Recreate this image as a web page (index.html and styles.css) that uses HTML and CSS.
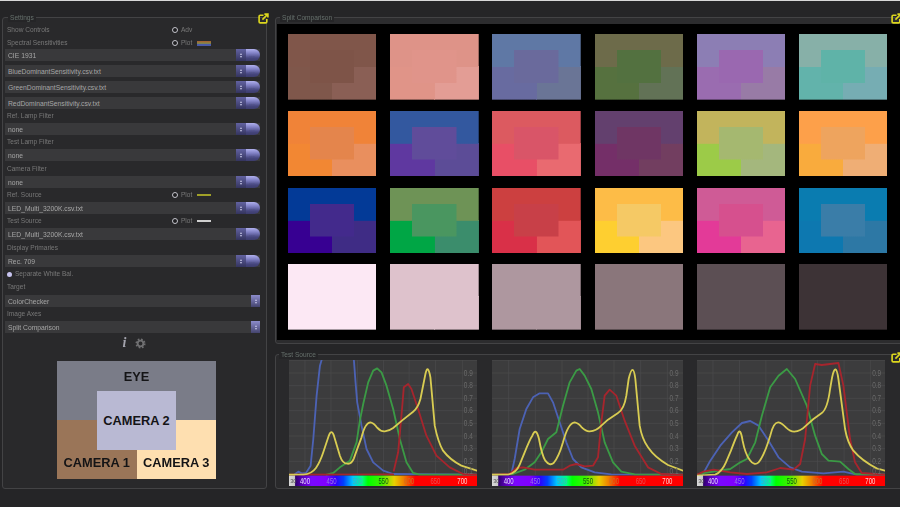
FILE: index.html
```html
<!DOCTYPE html>
<html lang="en">
<head>
<meta charset="utf-8">
<title>Split Comparison</title>
<link rel="stylesheet" href="styles.css">
</head>
<body>
<svg class="defs" width="0" height="0" aria-hidden="true">
  <defs>
    <linearGradient id="spectrum">
      <stop offset="0" stop-color="#d8d8d8"/>
      <stop offset=".03" stop-color="#c8c8c8"/>
      <stop offset=".035" stop-color="#300070"/>
      <stop offset=".07" stop-color="#5a00b8"/>
      <stop offset=".12" stop-color="#7a08ff"/>
      <stop offset=".2" stop-color="#8000ff"/>
      <stop offset=".25" stop-color="#3000ff"/>
      <stop offset=".29" stop-color="#0040ff"/>
      <stop offset=".34" stop-color="#00c8ff"/>
      <stop offset=".39" stop-color="#00ff80"/>
      <stop offset=".42" stop-color="#00ff00"/>
      <stop offset=".49" stop-color="#40f000"/>
      <stop offset=".56" stop-color="#e8d000"/>
      <stop offset=".61" stop-color="#f08000"/>
      <stop offset=".67" stop-color="#ff0000"/>
      <stop offset="1" stop-color="#ff0000"/>
    </linearGradient>
  </defs>
</svg>
<div class="app">
  <section class="panel settings">
    <h2 class="panel-title">Settings</h2>
    <svg class="pop" viewBox="0 0 10 10"><path d="M5 2H2a1 1 0 0 0-1 1v5a1 1 0 0 0 1 1h5a1 1 0 0 0 1-1V5.500M4 6l4.500-4.500M5.800 1H9v3.200"/></svg>
    <div class="stack">
      <div class="lbl"><span class="name">Show Controls</span><i class="radio"></i><span class="opt">Adv</span></div>
      <div class="lbl"><span class="name">Spectral Sensitivities</span><i class="radio"></i><span class="opt">Plot</span><i class="swatch rainbow"></i></div>
      <div class="field first"><span>CIE 1931</span><span class="pill"><span class="spin"></span><span class="dots">...</span></span></div>
      <div class="field"><span>BlueDominantSensitivity.csv.txt</span><span class="pill"><span class="spin"></span><span class="dots">...</span></span></div>
      <div class="field"><span>GreenDominantSensitivity.csv.txt</span><span class="pill"><span class="spin"></span><span class="dots">...</span></span></div>
      <div class="field"><span>RedDominantSensitivity.csv.txt</span><span class="pill"><span class="spin"></span><span class="dots">...</span></span></div>
      <div class="lbl"><span class="name">Ref. Lamp Filter</span></div>
      <div class="field"><span>none</span><span class="pill"><span class="spin"></span><span class="dots">...</span></span></div>
      <div class="lbl"><span class="name">Test Lamp Filter</span></div>
      <div class="field"><span>none</span><span class="pill"><span class="spin"></span><span class="dots">...</span></span></div>
      <div class="lbl spaced"><span class="name">Camera Filter</span></div>
      <div class="field"><span>none</span><span class="pill"><span class="spin"></span><span class="dots">...</span></span></div>
      <div class="lbl"><span class="name">Ref. Source</span><i class="radio"></i><span class="opt">Plot</span><i class="swatch olive"></i></div>
      <div class="field"><span>LED_Multi_3200K.csv.txt</span><span class="pill"><span class="spin"></span><span class="dots">...</span></span></div>
      <div class="lbl"><span class="name">Test Source</span><i class="radio"></i><span class="opt">Plot</span><i class="swatch white"></i></div>
      <div class="field"><span>LED_Multi_3200K.csv.txt</span><span class="pill"><span class="spin"></span><span class="dots">...</span></span></div>
      <div class="lbl spaced"><span class="name">Display Primaries</span></div>
      <div class="field"><span>Rec. 709</span><span class="pill"><span class="spin"></span><span class="dots">...</span></span></div>
      <div class="lbl check"><i class="dot"></i><span class="name">Separate White Bal.</span></div>
      <div class="lbl"><span class="name">Target</span></div>
      <div class="field spaced"><span>ColorChecker</span><span class="square"><span class="spin"></span></span></div>
      <div class="lbl"><span class="name">Image Axes</span></div>
      <div class="field"><span>Split Comparison</span><span class="square"><span class="spin"></span></span></div>
    </div>
    <div class="tools">
      <span class="info">i</span>
      <svg class="gear" viewBox="0 0 12 12"><circle cx="6" cy="6" r="3.100"/><circle class="teeth" cx="6" cy="6" r="4.700"/></svg>
    </div>
    <div class="legend">
      <div class="zone eye">EYE</div>
      <div class="zone cam1">CAMERA 1</div>
      <div class="zone cam3">CAMERA 3</div>
      <div class="cam2">CAMERA 2</div>
    </div>
  </section>

  <div class="main">
    <section class="panel comparison">
      <h2 class="panel-title">Split Comparison</h2>
      <svg class="pop" viewBox="0 0 10 10"><path d="M5 2H2a1 1 0 0 0-1 1v5a1 1 0 0 0 1 1h5a1 1 0 0 0 1-1V5.500M4 6l4.500-4.500M5.800 1H9v3.200"/></svg>
      <div class="viewport">
        <div class="patches">
          <div class="patch p1"></div><div class="patch p2"></div><div class="patch p3"></div><div class="patch p4"></div><div class="patch p5"></div><div class="patch p6"></div>
          <div class="patch p7"></div><div class="patch p8"></div><div class="patch p9"></div><div class="patch p10"></div><div class="patch p11"></div><div class="patch p12"></div>
          <div class="patch p13"></div><div class="patch p14"></div><div class="patch p15"></div><div class="patch p16"></div><div class="patch p17"></div><div class="patch p18"></div>
          <div class="patch p19"></div><div class="patch p20"></div><div class="patch p21"></div><div class="patch p22"></div><div class="patch p23"></div><div class="patch p24"></div>
        </div>
      </div>
    </section>

    <section class="panel source">
      <h2 class="panel-title">Test Source</h2>
      <svg class="pop" viewBox="0 0 10 10"><path d="M5 2H2a1 1 0 0 0-1 1v5a1 1 0 0 0 1 1h5a1 1 0 0 0 1-1V5.500M4 6l4.500-4.500M5.800 1H9v3.200"/></svg>
      <div class="charts">
        <svg class="chart" viewBox="57 43 565 378" preserveAspectRatio="none">
          <path class="grid" d="M57 44H622M57 82H622M57 120H622M57 158H622M57 195H622M57 233H622M57 271H622M57 309H622M57 347H622M105 43V387M183 43V387M263 43V387M341 43V387M418 43V387M497 43V387M578 43V387"/>
          <path class="c-blue" d="M75 385L85 378L95 383L108 382L122 360L130 280L140 150L150 60L155 43M252 43L257 110L262 170L275 240L290 310L310 350L340 375L370 385L620 387"/>
          <path class="c-green" d="M170 387L190 382L210 365L240 345L260 290L270 225L280 175L295 110L310 75L322 68L335 80L350 120L370 190L390 280L410 350L430 382L450 387L620 387"/>
          <path class="c-red" d="M57 387L370 386M372 375L385 320L395 210L402 125L415 115L425 130L445 190L470 270L500 330L540 365L580 385L620 387"/>
          <path class="c-yellow" d="M57 387L100 387Q125 385 138 367Q150 350 160 320Q170 290 176 272Q184 248 192 270Q198 290 210 330Q218 354 232 354Q245 356 252 338Q260 315 275 275Q286 230 302 230Q312 232 322 246Q332 258 345 257Q358 256 370 247L400 222L430 198Q444 188 452 160Q462 110 467 85Q474 52 482 95L495 240Q505 290 520 315Q540 342 575 360L622 375"/>
          <rect class="bar" x="57" y="390" width="565" height="31"/>
          <g class="ylab"><text x="596" y="90" textLength="27" lengthAdjust="spacingAndGlyphs">0.9</text><text x="596" y="128" textLength="27" lengthAdjust="spacingAndGlyphs">0.8</text><text x="596" y="166" textLength="27" lengthAdjust="spacingAndGlyphs">0.7</text><text x="596" y="203" textLength="27" lengthAdjust="spacingAndGlyphs">0.6</text><text x="596" y="241" textLength="27" lengthAdjust="spacingAndGlyphs">0.5</text><text x="596" y="279" textLength="27" lengthAdjust="spacingAndGlyphs">0.4</text><text x="596" y="316" textLength="27" lengthAdjust="spacingAndGlyphs">0.3</text><text x="596" y="354" textLength="27" lengthAdjust="spacingAndGlyphs">0.2</text><text x="596" y="386" textLength="27" lengthAdjust="spacingAndGlyphs">0.1</text></g>
          <g class="xlab"><text class="n0" x="70" y="413">30</text><text class="n1" x="105" y="414" textLength="30" lengthAdjust="spacingAndGlyphs">400</text><text class="n2" x="185" y="414" textLength="30" lengthAdjust="spacingAndGlyphs">450</text><text class="n3" x="263" y="414" textLength="30" lengthAdjust="spacingAndGlyphs">500</text><text class="n4" x="341" y="414" textLength="30" lengthAdjust="spacingAndGlyphs">550</text><text class="n5" x="418" y="414" textLength="30" lengthAdjust="spacingAndGlyphs">600</text><text class="n6" x="497" y="414" textLength="30" lengthAdjust="spacingAndGlyphs">650</text><text class="n7" x="578" y="414" textLength="30" lengthAdjust="spacingAndGlyphs">700</text></g>
        </svg>
        <svg class="chart wide" viewBox="22 43 573 378" preserveAspectRatio="none">
          <path class="grid" d="M22 44H595M22 82H595M22 120H595M22 158H595M22 195H595M22 233H595M22 271H595M22 309H595M22 347H595M72 43V387M152 43V387M232 43V387M310 43V387M388 43V387M468 43V387M548 43V387"/>
          <path class="c-blue" d="M22 387L80 385L90 340L105 250L125 190L145 155L165 143L190 143L205 170L225 230L245 290L265 340L290 365L330 380L380 386L595 387"/>
          <path class="c-green" d="M22 387L85 385L120 372L150 350L170 320L190 280L215 260L235 180L255 110L275 75L285 70L300 90L320 130L340 200L360 290L385 350L410 378L450 386L595 387"/>
          <path class="c-red" d="M22 387L75 385L95 367L115 365L150 372L235 372L255 360L275 355L300 362L325 360L340 335L350 230L360 150L375 132L395 150L420 225L450 300L490 365L530 385L595 387"/>
          <path class="c-yellow" d="M22 387L70 387Q95 382 105 357L120 320Q135 282 143 270Q154 242 163 280Q172 330 182 345Q195 362 207 352Q222 335 235 290Q250 232 270 230Q282 232 292 246Q305 258 315 257Q335 256 350 240L370 222L400 202Q418 192 425 150L432 100Q445 45 452 100L465 240Q472 280 490 305Q510 335 550 358L595 375"/>
          <rect class="bar" x="22" y="390" width="573" height="31"/>
          <g class="ylab"><text x="568" y="90" textLength="27" lengthAdjust="spacingAndGlyphs">0.9</text><text x="568" y="128" textLength="27" lengthAdjust="spacingAndGlyphs">0.8</text><text x="568" y="166" textLength="27" lengthAdjust="spacingAndGlyphs">0.7</text><text x="568" y="203" textLength="27" lengthAdjust="spacingAndGlyphs">0.6</text><text x="568" y="241" textLength="27" lengthAdjust="spacingAndGlyphs">0.5</text><text x="568" y="279" textLength="27" lengthAdjust="spacingAndGlyphs">0.4</text><text x="568" y="316" textLength="27" lengthAdjust="spacingAndGlyphs">0.3</text><text x="568" y="354" textLength="27" lengthAdjust="spacingAndGlyphs">0.2</text><text x="568" y="386" textLength="27" lengthAdjust="spacingAndGlyphs">0.1</text></g>
          <g class="xlab"><text class="n0" x="35" y="413">30</text><text class="n1" x="72" y="414" textLength="30" lengthAdjust="spacingAndGlyphs">400</text><text class="n2" x="152" y="414" textLength="30" lengthAdjust="spacingAndGlyphs">450</text><text class="n3" x="232" y="414" textLength="30" lengthAdjust="spacingAndGlyphs">500</text><text class="n4" x="310" y="414" textLength="30" lengthAdjust="spacingAndGlyphs">550</text><text class="n5" x="388" y="414" textLength="30" lengthAdjust="spacingAndGlyphs">600</text><text class="n6" x="468" y="414" textLength="30" lengthAdjust="spacingAndGlyphs">650</text><text class="n7" x="548" y="414" textLength="30" lengthAdjust="spacingAndGlyphs">700</text></g>
        </svg>
        <svg class="chart" viewBox="20 43 565 378" preserveAspectRatio="none">
          <path class="grid" d="M20 44H585M20 82H585M20 120H585M20 158H585M20 195H585M20 233H585M20 271H585M20 309H585M20 347H585M68 43V387M148 43V387M227 43V387M305 43V387M382 43V387M462 43V387M541 43V387"/>
          <path class="c-blue" d="M38 385L60 345L90 300L125 260L155 232L180 226L205 240L235 285L265 335L300 365L335 378L400 383L460 378L500 387L585 387"/>
          <path class="c-green" d="M20 387L40 382L120 370L150 350L170 340L195 290L215 210L240 125L265 90L290 70L315 100L350 180L375 270L395 325L415 345L450 348L475 370L495 385L585 387"/>
          <path class="c-red" d="M20 387L40 378L70 372L120 380L170 385L230 380L270 367L310 372L330 355L345 280L360 120L375 55L395 58L445 52L460 120L480 280L495 350L515 382L585 387"/>
          <path class="c-yellow" d="M20 390L75 387Q95 378 107 350L122 315Q135 280 141 268Q150 240 157 285Q165 325 178 342Q192 362 205 350Q222 330 240 270Q250 228 265 230Q275 232 288 246Q300 258 312 258Q332 256 345 242L370 220L395 202Q412 190 420 130L426 95Q437 45 445 100L465 250Q472 290 490 315Q515 345 560 368L585 375"/>
          <rect class="bar" x="20" y="390" width="565" height="31"/>
          <g class="ylab"><text x="560" y="90" textLength="27" lengthAdjust="spacingAndGlyphs">0.9</text><text x="560" y="128" textLength="27" lengthAdjust="spacingAndGlyphs">0.8</text><text x="560" y="166" textLength="27" lengthAdjust="spacingAndGlyphs">0.7</text><text x="560" y="203" textLength="27" lengthAdjust="spacingAndGlyphs">0.6</text><text x="560" y="241" textLength="27" lengthAdjust="spacingAndGlyphs">0.5</text><text x="560" y="279" textLength="27" lengthAdjust="spacingAndGlyphs">0.4</text><text x="560" y="316" textLength="27" lengthAdjust="spacingAndGlyphs">0.3</text><text x="560" y="354" textLength="27" lengthAdjust="spacingAndGlyphs">0.2</text><text x="560" y="386" textLength="27" lengthAdjust="spacingAndGlyphs">0.1</text></g>
          <g class="xlab"><text class="n0" x="33" y="413">30</text><text class="n1" x="68" y="414" textLength="30" lengthAdjust="spacingAndGlyphs">400</text><text class="n2" x="148" y="414" textLength="30" lengthAdjust="spacingAndGlyphs">450</text><text class="n3" x="227" y="414" textLength="30" lengthAdjust="spacingAndGlyphs">500</text><text class="n4" x="305" y="414" textLength="30" lengthAdjust="spacingAndGlyphs">550</text><text class="n5" x="382" y="414" textLength="30" lengthAdjust="spacingAndGlyphs">600</text><text class="n6" x="462" y="414" textLength="30" lengthAdjust="spacingAndGlyphs">650</text><text class="n7" x="541" y="414" textLength="30" lengthAdjust="spacingAndGlyphs">700</text></g>
        </svg>
      </div>
    </section>
  </div>
</div>
</body>
</html>
```
FILE: styles.css
```css
* { box-sizing: border-box; }
html, body { margin: 0; height: 100%; }
body {
  background: #252527;
  overflow: hidden;
  font-family: "Liberation Sans", Arial, sans-serif;
  border-top: 1px solid #d8d8d8;
}
.defs { display: block; height: 0; }

.app {
  display: flex;
  gap: 8px;
  width: 905px;
  height: 506px;
  padding: 16px 0 0 2px;
  filter: blur(.4px);
}

/* frames */
.panel {
  position: relative;
  border: 1px solid #434345;
  border-radius: 3px;
  background: #29292b;
}
.panel-title {
  width: fit-content;
  height: 8px;
  margin: -4px 0 0 3px;
  padding: 0 2px;
  background: #252527;
  color: #66706c;
  font-size: 6.6px;
  font-weight: normal;
  line-height: 8px;
}
.pop {
  position: absolute;
  top: -5px;
  right: -3px;
  width: 11px;
  height: 11px;
  fill: none;
  stroke: #dcd61e;
  stroke-width: 1.5;
}

/* settings column */
.settings {
  flex: 0 0 265px;
  height: 472px;
  padding: 0 6px 0 2px;
}
.stack {
  display: flex;
  flex-direction: column;
  padding-top: 1px;
}
.lbl {
  display: flex;
  align-items: center;
  height: 12px;
  margin-top: 1px;
  padding-left: 2px;
  color: #787878;
  font-size: 6.55px;
  line-height: 12px;
}
.lbl.spaced { margin-top: 2px; }
.lbl .name { width: 165px; flex: none; }
.lbl.check .name { width: auto; }
.radio {
  flex: none;
  width: 6px;
  height: 6px;
  border: 1.6px solid #c4c4cc;
  border-radius: 50%;
  background: #1e1e20;
}
.opt { width: 16px; margin-left: 3px; flex: none; }
.swatch { flex: none; width: 14px; }
.rainbow { height: 5px; background: linear-gradient(#a85a30, #8a8a40 45%, #4a5aa8 70%); }
.olive { height: 1.5px; background: #a0a028; }
.white { height: 1.5px; background: #cfcfcf; }
.dot {
  flex: none;
  width: 5px;
  height: 5px;
  margin: 0 3px 0 0;
  border-radius: 50%;
  background: #c8c4f0;
}
.field {
  display: flex;
  align-items: center;
  justify-content: space-between;
  height: 12px;
  margin-top: 4px;
  padding-left: 3px;
  background: #39393b;
  color: #a6a6a6;
  font-size: 6.75px;
}
.lbl + .field { margin-top: 1px; }
.lbl + .field.first { margin-top: 0; }
.lbl + .field.spaced { margin-top: 2px; }
.pill {
  display: flex;
  width: 24px;
  height: 12px;
  border-radius: 0 6px 6px 0;
  overflow: hidden;
}
.spin {
  display: flex;
  flex-direction: column;
  align-items: center;
  justify-content: center;
  gap: 1px;
  width: 10px;
  height: 100%;
  background: linear-gradient(#6262a0, #34345e);
}
.spin::before, .spin::after {
  content: "";
  width: 0;
  height: 0;
  border-left: 1.500px solid transparent;
  border-right: 1.500px solid transparent;
}
.spin::before { border-bottom: 2px solid #c8c8e8; }
.spin::after { border-top: 2px solid #c8c8e8; }
.dots {
  flex: 1;
  padding-left: 3px;
  background: linear-gradient(#b0b0ee, #8080c4 35%, #46467e 75%, #3c3c6c);
  color: #4c4c80;
  font-size: 7px;
  line-height: 12px;
}
.square { width: 9px; height: 12px; }
.square .spin { width: 9px; background: linear-gradient(#8c8ccc, #44446e); }

.tools {
  display: flex;
  align-items: center;
  justify-content: center;
  gap: 9px;
  height: 14px;
  margin: 3px 0 0 4px;
}
.info {
  color: #a4a4ae;
  font-family: "Liberation Serif", serif;
  font-size: 14px;
  font-style: italic;
  font-weight: bold;
  line-height: 14px;
}
.gear { width: 11px; height: 11px; fill: none; stroke: #707072; stroke-width: 2; }
.gear .teeth { stroke-width: 1.6; stroke-dasharray: 1.850 1.850; }

.legend {
  position: relative;
  display: grid;
  grid-template: 1fr 1fr / 1fr 1fr;
  width: 159px;
  height: 118px;
  margin: 11px 0 0 52px;
  color: #141416;
  font-size: 12.800px;
  font-weight: bold;
  line-height: 15px;
  text-align: center;
}
.zone { padding-top: 8px; }
.eye { grid-column: 1 / 3; background: #7a7c88; }
.cam1 { background: #9a7558; padding-top: 35px; }
.cam3 { background: #fedfb0; padding-top: 35px; }
.cam2 {
  position: absolute;
  inset: 25% 25%;
  display: flex;
  align-items: center;
  justify-content: center;
  background: #b9b9d3;
}

/* right column */
.main {
  flex: 1;
  display: flex;
  flex-direction: column;
  gap: 10px;
}
.comparison {
  display: flex;
  flex-direction: column;
  height: 327px;
  padding: 0 0 3px 1px;
  background: #2c2c2e;
}
.comparison .pop, .source .pop { right: 2px; }
.source .pop { top: -3px; }
.viewport {
  flex: 1;
  margin-top: 2px;
  padding: 10px 0 0 11px;
  background: #000;
}
.patches {
  display: grid;
  grid-template-columns: repeat(6, 88.400px);
  grid-auto-rows: 65.600px;
  gap: 11.200px 13.800px;
}
.patch {
  background:
    linear-gradient(var(--d), var(--d)) center / 50% 50% no-repeat,
    linear-gradient(var(--a), var(--a)) top / 100% 50.500% no-repeat,
    linear-gradient(var(--b), var(--b)) left bottom / 50.500% 51% no-repeat,
    linear-gradient(var(--c), var(--c)) right bottom / 50.500% 51% no-repeat;
}
.p1 { --a:#80564a; --b:#7f574b; --c:#8a5f55; --d:#7e5448; }
.p2 { --a:#de9388; --b:#e09488; --c:#e39d95; --d:#e0948a; }
.p3 { --a:#5f78a5; --b:#686ba0; --c:#6a7596; --d:#6a6a9c; }
.p4 { --a:#6d6b4a; --b:#56713f; --c:#627256; --d:#537140; }
.p5 { --a:#8c7eb4; --b:#9a6cb0; --c:#987ba6; --d:#9a68b0; }
.p6 { --a:#87b0a8; --b:#62b3ab; --c:#76adb3; --d:#5fb3a8; }
.p7 { --a:#f08338; --b:#f28733; --c:#e98f5e; --d:#e4854c; }
.p8 { --a:#33589f; --b:#5f38a0; --c:#5c4c97; --d:#604c9a; }
.p9 { --a:#dc5a60; --b:#e84f66; --c:#e96a70; --d:#d95568; }
.p10 { --a:#63406e; --b:#742f68; --c:#723e60; --d:#6f3664; }
.p11 { --a:#c2b45c; --b:#9ccb48; --c:#a4b77d; --d:#a5b870; }
.p12 { --a:#fda04a; --b:#f9ab3d; --c:#efae75; --d:#eea45e; }
.p13 { --a:#033a97; --b:#370092; --c:#3f2c85; --d:#432a8c; }
.p14 { --a:#6e9356; --b:#00a645; --c:#3b8d6c; --d:#4a9660; }
.p15 { --a:#cc4040; --b:#d93048; --c:#e25558; --d:#c84048; }
.p16 { --a:#fdbc47; --b:#fecf30; --c:#fcc780; --d:#f5c965; }
.p17 { --a:#cf5b96; --b:#e33a98; --c:#e86490; --d:#d6508e; }
.p18 { --a:#0a7cb0; --b:#0d78b0; --c:#2d78a5; --d:#3a7da8; }
.p19 { --a:#fce8f4; --b:#fce8f4; --c:#fce8f4; --d:#fce8f4; }
.p20 { --a:#dec2cc; --b:#dec2cc; --c:#dec2cc; --d:#dec2cc; }
.p21 { --a:#ae979f; --b:#ae979f; --c:#ae979f; --d:#ae979f; }
.p22 { --a:#8a767b; --b:#8a767b; --c:#8a767b; --d:#8a767b; }
.p23 { --a:#5c4f54; --b:#5c4f54; --c:#5c4f54; --d:#5c4f54; }
.p24 { --a:#3d3336; --b:#3d3336; --c:#3d3336; --d:#3d3336; }

/* plots */
.source { height: 135px; }
.charts {
  display: flex;
  gap: 14.500px;
  padding: 1px 0 0 13px;
}
.chart { display: block; width: 188px; height: 126px; background: #3c3c3d; }
.chart.wide { width: 191px; }
.chart path { fill: none; stroke-width: 5.500; stroke-linejoin: round; stroke-linecap: round; }
.chart .grid { stroke: #4c4c4d; stroke-width: 2; }
.c-blue { stroke: #4c62b4; }
.c-green { stroke: #3b9a45; }
.c-red { stroke: #a6252d; }
.c-yellow { stroke: #d8cc52; }
.bar { fill: url(#spectrum); }
.ylab text, .xlab text { font-family: "Liberation Sans", sans-serif; font-size: 27px; text-anchor: middle; }
.ylab text { fill: #6a6a6a; }
.xlab .n0 { font-size: 17px; fill: #555; }
.n1 { fill: #e4d8ff; }
.n2 { fill: #9a78e8; }
.n3 { fill: #3fb0c0; }
.n4 { fill: #0a5a10; }
.n5 { fill: #d07020; }
.n6 { fill: #e85050; }
.n7 { fill: #ffd0d0; }
```
